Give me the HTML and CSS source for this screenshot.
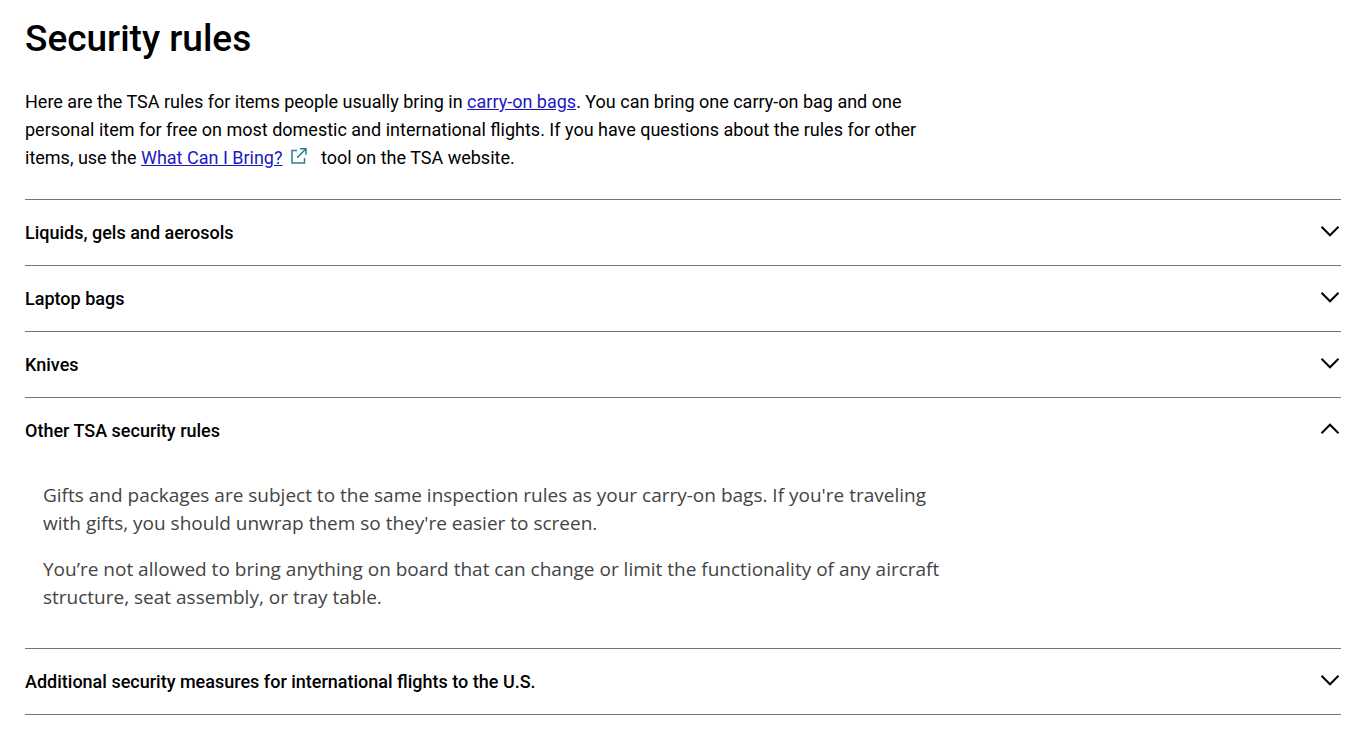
FILE: index.html
```
<!DOCTYPE html>
<html lang="en">
<head>
  <meta charset="UTF-8" />
  <meta name="viewport" content="width=device-width, initial-scale=1" />
  <title>Security rules</title>
  <link rel="stylesheet" href="styles.css">
</head>
<body>
  <main class="page">
    <h1>Security rules</h1>
    <p class="intro">
      Here are the TSA rules for items people usually bring in <a href="#">carry-on bags</a>. You can bring one carry-on bag and one personal item for free on most domestic and international flights. If you have questions about the rules for other items, use the <a href="#">What Can I Bring?</a><svg class="external" viewBox="0 0 16 16" aria-hidden="true"><path d="M6 2.5H1v12.500h12.500V10M9 .8h6v6M15 .8 6.200 9.600" /></svg>
      tool on the TSA website.
    </p>

    <div class="accordion">
      <section class="item">
        <h2><button type="button" aria-expanded="false" aria-controls="liquids">Liquids, gels and aerosols <svg class="chevron" viewBox="0 0 20 12" aria-hidden="true"><path d="M1.500 1.800l8.500 8.500 8.500-8.500" /></svg></button></h2>
        <div class="panel" id="liquids" hidden></div>
      </section>
      <section class="item">
        <h2><button type="button" aria-expanded="false" aria-controls="laptops">Laptop bags <svg class="chevron" viewBox="0 0 20 12" aria-hidden="true"><path d="M1.500 1.800l8.500 8.500 8.500-8.500" /></svg></button></h2>
        <div class="panel" id="laptops" hidden></div>
      </section>
      <section class="item">
        <h2><button type="button" aria-expanded="false" aria-controls="knives">Knives <svg class="chevron" viewBox="0 0 20 12" aria-hidden="true"><path d="M1.500 1.800l8.500 8.500 8.500-8.500" /></svg></button></h2>
        <div class="panel" id="knives" hidden></div>
      </section>
      <section class="item">
        <h2><button type="button" aria-expanded="true" aria-controls="other">Other TSA security rules <svg class="chevron" viewBox="0 0 20 12" aria-hidden="true"><path d="M1.500 1.800l8.500 8.500 8.500-8.500" /></svg></button></h2>
        <div class="panel" id="other">
          <p>Gifts and packages are subject to the same inspection rules as your carry-on bags. If you're traveling with gifts, you should unwrap them so they're easier to screen.</p>
          <p>You’re not allowed to bring anything on board that can change or limit the functionality of any aircraft structure, seat assembly, or tray table.</p>
        </div>
      </section>
      <section class="item">
        <h2><button type="button" aria-expanded="false" aria-controls="international">Additional security measures for international flights to the U.S. <svg class="chevron" viewBox="0 0 20 12" aria-hidden="true"><path d="M1.500 1.800l8.500 8.500 8.500-8.500" /></svg></button></h2>
        <div class="panel" id="international" hidden></div>
      </section>
    </div>
  </main>

  <script>
    // Open and close the accordion panels
    document.querySelectorAll('.item button').forEach((button) => {
      button.addEventListener('click', () => {
        const open = button.getAttribute('aria-expanded') === 'true';
        button.setAttribute('aria-expanded', String(!open));
        document.getElementById(button.getAttribute('aria-controls')).hidden = open;
      });
    });
  </script>
</body>
</html>
```
FILE: styles.css
```
body {
  margin: 0;
  font-family: Roboto, "Liberation Sans", sans-serif;
  font-size: 18px;
  line-height: 28px;
  background-color: #fff;
  color: #000;
}

.page {
  padding: 15px 25px;
}

h1 {
  margin: 0 0 25px;
  font-size: 37px;
  line-height: 48px;
  font-weight: 500;
}

.intro {
  max-width: 900px;
  margin: 0 0 27px;
}

.intro a {
  color: #2118c4;
  text-decoration: underline;
}

.external {
  width: 16px;
  height: 16px;
  margin: 0 10px 0 8px;
  fill: none;
  stroke: #2a7f93;
  stroke-width: 1.5;
}

/* Accordion */
.accordion {
  border-bottom: 1px solid #767676;
}

.item {
  border-top: 1px solid #767676;
}

.item h2 {
  margin: 0;
  font-size: 18px;
}

.item button {
  display: flex;
  justify-content: space-between;
  align-items: flex-start;
  width: 100%;
  padding: 19px 1px 18px 0;
  border: 0;
  background: none;
  color: #000;
  font: inherit;
  font-weight: 500;
  line-height: 28px;
  text-align: left;
  cursor: pointer;
}

.chevron {
  flex-shrink: 0;
  width: 20px;
  height: 12px;
  margin-top: 6px;
  fill: none;
  stroke: #000;
  stroke-width: 2;
}

.item button[aria-expanded="true"] .chevron {
  transform: rotate(180deg);
}

.panel {
  max-width: 900px;
  padding: 18px 18px 37px;
  font-family: "Open Sans", sans-serif;
  font-size: 19px;
  color: #444;
}

.panel p {
  margin: 0;
}

.panel p + p {
  margin-top: 18px;
}
```
